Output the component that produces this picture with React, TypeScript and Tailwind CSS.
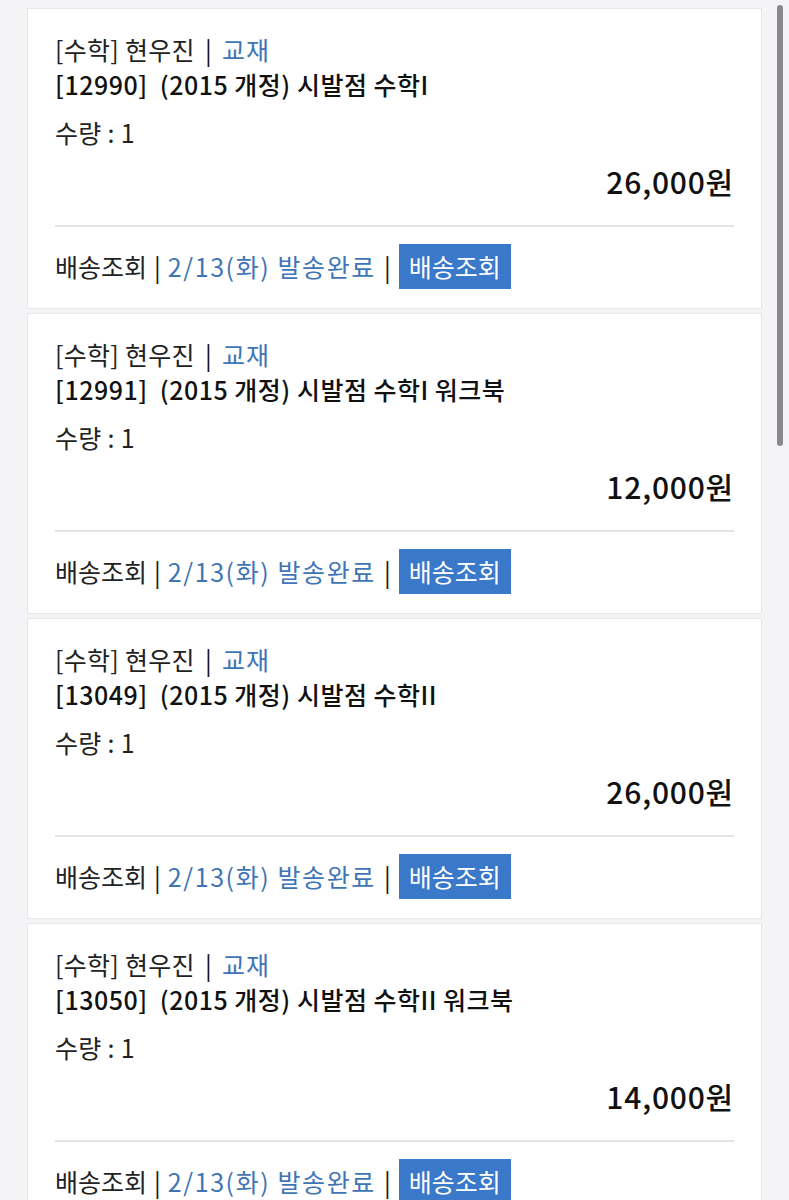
import React from 'react';

const items = [
  { code: '12990', title: '(2015 개정) 시발점 수학I', price: '26,000' },
  { code: '12991', title: '(2015 개정) 시발점 수학I 워크북', price: '12,000' },
  { code: '13049', title: '(2015 개정) 시발점 수학II', price: '26,000' },
  { code: '13050', title: '(2015 개정) 시발점 수학II 워크북', price: '14,000' },
];

function OrderCard({ code, title, price }: { code: string; title: string; price: string }) {
  return (
    <div className="bg-white border border-[#e6e6e8] px-[27px] pt-[23px] pb-[19px]">
      <div className="flex text-[25px] leading-[35px] text-[#222] tracking-[0.3px]">
        <span>[수학] 현우진</span>
        <span className="mx-[10px] text-[#111]">|</span>
        <span className="text-[#3f74b5] tracking-[1px]">교재</span>
      </div>
      <div className="text-[25px] leading-[35px] font-medium text-[#111] tracking-[0.5px]">
        [{code}]&nbsp; {title}
      </div>
      <div className="mt-[13px] text-[25px] leading-[35px] text-[#222] tracking-[0.3px]">수량 : 1</div>
      <div className="mt-[13px] text-right text-[30px] leading-[36px] font-medium text-[#111] tracking-[0.8px]">
        {price}
        <span>원</span>
      </div>
      <div className="mt-[26px] h-[2px] bg-[#e4e4e6]" />
      <div className="mt-[17px] flex items-center text-[25px] leading-[45px] text-[#222]">
        <span>배송조회</span>
        <span className="mx-[7px] text-[#111]">|</span>
        <span className="text-[#3f74b5] tracking-[1.6px]">2/13(화) 발송완료</span>
        <span className="mx-[8px] text-[#111]">|</span>
        <span className="bg-[#3a78c9] text-white px-[10px] h-[45px] leading-[45px]">배송조회</span>
      </div>
    </div>
  );
}

export default function App() {
  return (
    <div
      className="relative min-h-[1200px] bg-[#f4f4f6] pl-[27px] pr-[27px] pt-[8px]"
      style={{ fontFamily: '"Noto Sans CJK KR", "Noto Sans", sans-serif' }}
    >
      <div className="flex flex-col gap-[4px]">
        {items.map((item) => (
          <OrderCard key={item.code} {...item} />
        ))}
      </div>
      <div className="absolute top-[5px] right-[6px] w-[6px] h-[441px] rounded-full bg-[#8a8a8c]" />
    </div>
  );
}
